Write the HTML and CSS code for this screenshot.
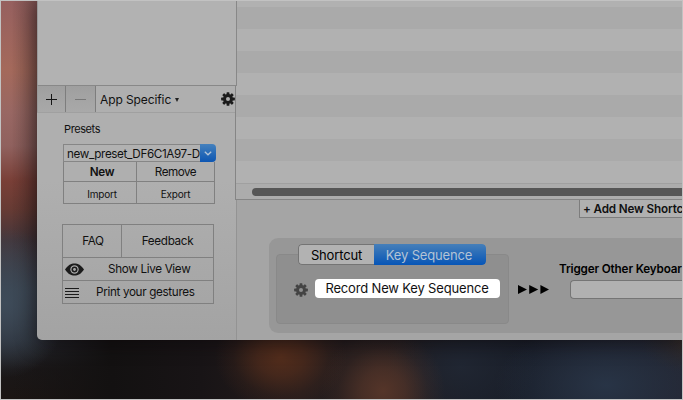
FILE: index.html
```
<!DOCTYPE html>
<html lang="en">
<head>
    <meta charset="UTF-8">
    <meta name="viewport" content="width=device-width, initial-scale=1.0">
    <title>Key Sequence</title>
    <link rel="stylesheet" href="styles.css">
</head>
<body>
    <!-- gear shared by both settings buttons -->
    <svg width="0" height="0" class="defs">
        <symbol id="gear" viewBox="-10 -10 20 20">
            <g fill="currentColor">
                <g id="teeth">
                    <rect x="-2" y="-9.8" width="4" height="19.6" rx="0.8"/>
                    <rect x="-9.8" y="-2" width="19.6" height="4" rx="0.8"/>
                </g>
                <use href="#teeth" transform="rotate(45)"/>
                <circle r="7"/>
            </g>
            <circle class="gear-hole" r="2.9"/>
        </symbol>
    </svg>

    <div class="desktop">
        <div class="window">
            <!-- Sidebar -->
            <div class="sidebar">
                <div class="app-list"></div>
                <div class="toolbar">
                    <button class="tool-btn">
                        <svg width="11" height="11" viewBox="0 0 11 11"><path d="M0 5.5h11M5.5 0v11" stroke="#151515"/></svg>
                    </button>
                    <button class="tool-btn disabled">
                        <svg width="11" height="11" viewBox="0 0 11 11"><path d="M0 5.5h11" stroke="#777"/></svg>
                    </button>
                    <span class="app-specific">App Specific</span>
                    <svg class="caret" width="4" height="4" viewBox="0 0 4 4"><path d="M0 0h4L2 4z" fill="#222"/></svg>
                    <svg class="toolbar-gear" width="14" height="14"><use href="#gear"/></svg>
                </div>

                <div class="presets">
                    <div class="presets-label">Presets</div>
                    <div class="combo">
                        <div class="combo-value"><span>new_preset_DF6C1A97-D</span></div>
                        <div class="combo-arrow">
                            <svg width="8" height="5" viewBox="0 0 8 5"><path d="M.8.7 4 3.8 7.2.7" fill="none" stroke="#b4c4d6" stroke-width="1.3"/></svg>
                        </div>
                    </div>
                    <div class="preset-grid">
                        <button class="new"><span>New</span></button>
                        <button class="remove"><span>Remove</span></button>
                        <button class="small import"><span>Import</span></button>
                        <button class="small export"><span>Export</span></button>
                    </div>
                </div>

                <div class="links">
                    <div class="links-row">
                        <button class="faq"><span>FAQ</span></button>
                        <button class="feedback"><span>Feedback</span></button>
                    </div>
                    <button class="wide live">
                        <svg width="19" height="13" viewBox="0 0 19 13">
                            <path d="M0 6.5C3 2 6 .4 9.5 .4S16 2 19 6.5C16 11 13 12.6 9.5 12.6S3 11 0 6.5z" fill="#1b1b1b"/>
                            <circle cx="9.5" cy="6.5" r="4.2" fill="#a9a9a9"/>
                            <circle cx="9.5" cy="6.5" r="3" fill="#1b1b1b"/>
                            <circle cx="9.5" cy="6.5" r="1.4" fill="#a9a9a9"/>
                        </svg>
                        <span>Show Live View</span>
                    </button>
                    <button class="wide print">
                        <svg width="14" height="10" viewBox="0 0 14 10"><path d="M0 .5h14M0 3.5h14M0 6.5h14M0 9.5h14" stroke="#1b1b1b"/></svg>
                        <span>Print your gestures</span>
                    </button>
                </div>
            </div>

            <!-- Shortcuts -->
            <div class="main">
                <div class="table">
                    <div class="rows"></div>
                    <div class="scrollbar"><div class="thumb"></div></div>
                </div>
                <div class="details">
                    <button class="add"><span>+ Add New Shortc</span></button>
                    <div class="panel">
                        <div class="sequence">
                            <div class="tabs">
                                <div class="tab"><span>Shortcut</span></div>
                                <div class="tab active"><span>Key Sequence</span></div>
                            </div>
                            <div class="record-row">
                                <svg class="record-gear" width="14" height="14"><use href="#gear"/></svg>
                                <button class="record"><span>Record New Key Sequence</span></button>
                            </div>
                        </div>
                        <svg class="arrows" width="31" height="9" viewBox="0 0 31 9"><path d="M0 0 9 4.5 0 9zM11.2 0l9 4.5-9 4.5zM22.4 0l8.6 4.5-8.6 4.5z"/></svg>
                        <div class="trigger">
                            <div class="trigger-label"><span>Trigger Other Keyboar</span></div>
                            <div class="trigger-field"></div>
                        </div>
                    </div>
                </div>
            </div>
        </div>
    </div>
</body>
</html>
```
FILE: styles.css
```
* {
    box-sizing: border-box;
}

body {
    margin: 0;
    font-family: Inter, "Liberation Sans", sans-serif;
    font-size: 11.7px;
    letter-spacing: -0.33px;
    color: #111;
}

button {
    margin: 0;
    padding: 0;
    border: 0;
    background: none;
    font: inherit;
    letter-spacing: inherit;
    color: inherit;
}

svg {
    display: block;
    flex: none;
}

span {
    white-space: nowrap;
}

.defs {
    position: absolute;
}

.gear-hole {
    fill: var(--hole);
}

.desktop {
    width: 683px;
    height: 400px;
    padding-left: 36px;
    border: 1px solid #c2c2c2;
    overflow: hidden;
    background:
        radial-gradient(ellipse 66px 54px at 280px 356px, #532d1c, rgba(83, 45, 28, 0.7) 35%, rgba(83, 45, 28, 0.2) 72%, rgba(83, 45, 28, 0)),
        radial-gradient(ellipse 62px 62px at 382px 390px, #553529, rgba(85, 53, 41, 0.7) 35%, rgba(85, 53, 41, 0.2) 72%, rgba(85, 53, 41, 0)),
        radial-gradient(ellipse 110px 65px at 605px 384px, #283446, rgba(40, 52, 70, 0)),
        radial-gradient(ellipse 75px 60px at 460px 365px, #202632, rgba(32, 38, 50, 0)),
        radial-gradient(ellipse 50px 30px at 690px 342px, #302722, rgba(48, 39, 34, 0)),
        radial-gradient(ellipse 62px 75px at 5px 302px, #3e4b59, rgba(62, 75, 89, 0)),
        linear-gradient(90deg, rgba(18, 17, 17, 0) 10px, #131111 110px, #181416 200px, #251c1c 300px, #231e20 400px, #191d27 470px, #191e29 530px, #232531),
        linear-gradient(#96605f, #a4695b 68px, #986763 112px, #90615e 145px, #793f37 180px, #673b34 208px, #44363b 240px, #38404a 290px, #282c34 340px, #1a1718 368px, #1b1513);
}

.window {
    display: flex;
    width: 645px;
    height: 339px;
    border-bottom-left-radius: 5px;
    overflow: hidden;
    background: linear-gradient(#afafaf 180px, #a3a3a3);
    box-shadow: 0 2px 20px rgba(10, 5, 8, 0.6);
}

/* Sidebar */
.sidebar {
    width: 198px;
    flex: none;
}

.app-list {
    position: relative;
    z-index: 1;
    width: 200px;
    height: 85px;
    border-right: 1px solid #888;
    border-bottom: 1px solid #888;
    border-left: 1px solid #999;
    background: #b2b2b2;
}

.toolbar {
    display: flex;
    align-items: center;
    height: 27px;
    border-bottom: 1px solid #a0a0a0;
    border-left: 1px solid #999;
}

.tool-btn {
    display: flex;
    align-items: center;
    justify-content: center;
    width: 28px;
    height: 26px;
    border-right: 1px solid #7d7d7d;
    background: linear-gradient(#9f9f9f, #a9a9a9);
}

.tool-btn.disabled {
    width: 30px;
}

.app-specific {
    margin: 1px 4px 0 4px;
    font-size: 12px;
    letter-spacing: -0.1px;
}

.caret {
    margin-top: 2px;
}

.toolbar-gear {
    margin-left: auto;
    color: #1b1b1b;
    --hole: #acacac;
}

.presets {
    width: 153px;
    margin: 10px 0 0 26px;
}

.presets-label {
    height: 21px;
    padding-left: 1px;
    font-size: 11px;
    letter-spacing: -0.4px;
    line-height: 13px;
}

.combo {
    display: flex;
    height: 18px;
}

.combo-value {
    width: 137px;
    padding-left: 3px;
    border: 1px solid #868686;
    border-right: 0;
    background: #b1b1b1;
    letter-spacing: -0.38px;
    line-height: 18px;
    overflow: hidden;
}

.combo-arrow {
    display: flex;
    align-items: center;
    justify-content: center;
    width: 16px;
    border-radius: 0 4px 4px 0;
    background: linear-gradient(#4581bd, #0d56b2);
}

.preset-grid {
    display: grid;
    grid-template-columns: 73px 77px;
    grid-template-rows: 20px 22px;
    width: 152px;
    border-right: 1px solid #808080;
    border-left: 1px solid #808080;
}

.preset-grid button {
    display: flex;
    align-items: center;
    justify-content: center;
    border-right: 1px solid #808080;
    border-bottom: 1px solid #808080;
}

.preset-grid .remove,
.preset-grid .export {
    border-right: 0;
}

.preset-grid .remove {
    letter-spacing: -0.5px;
}

.preset-grid .new {
    padding-left: 4px;
    font-weight: 600;
}

.preset-grid .small {
    padding-top: 3px;
    font-size: 10px;
    letter-spacing: -0.2px;
}

.preset-grid .import {
    padding-left: 4px;
}

.links {
    width: 152px;
    height: 80px;
    margin: 20px 0 0 25px;
    border: 1px solid #808080;
}

.links-row {
    display: flex;
    height: 33px;
    border-bottom: 1px solid #808080;
}

.faq {
    width: 59px;
    padding-left: 2px;
    border-right: 1px solid #808080;
}

.feedback {
    flex: 1;
}

.wide {
    display: flex;
    align-items: center;
    width: 100%;
    height: 23px;
    padding-left: 2px;
    border-bottom: 1px solid #808080;
}

.print {
    border-bottom: 0;
}

.live span {
    margin-left: 24px;
}

.print span {
    margin: 0 0 1px 17px;
}

/* Shortcut table */
.main {
    flex: 1;
    min-width: 0;
}

.table {
    height: 199px;
    border-bottom: 1px solid #858585;
    border-left: 1px solid #858585;
}

.rows {
    height: 182px;
    background: repeating-linear-gradient(#b1b1b1 0, #b1b1b1 6px, #aaa 6px, #aaa 28px, #b1b1b1 28px, #b1b1b1 44px);
}

.scrollbar {
    height: 16px;
    padding: 4px 0 0 16px;
    border-top: 1px solid #a0a0a0;
    background: #acacac;
}

.thumb {
    height: 8px;
    border-radius: 4px 0 0 4px;
    background: #565656;
}

.details {
    height: 140px;
    margin-left: 1px;
    border-left: 1px solid #939393;
    background: #a5a5a5;
}

.add {
    display: flex;
    align-items: center;
    width: 103px;
    height: 18px;
    margin-left: 342px;
    padding-left: 3px;
    border: 1px solid #7d7d7d;
    border-width: 0 0 1px 1px;
    background: #b0b0b0;
    font-weight: 600;
    letter-spacing: -0.15px;
}

/* Key sequence panel */
.panel {
    display: flex;
    height: 95px;
    margin: 20px 0 0 32px;
    border-radius: 9px 0 0 9px;
    background: #979797;
}

.sequence {
    flex: none;
    width: 233px;
    height: 70px;
    margin: 16px 0 0 7px;
    border: 1px solid #898989;
    border-radius: 4px;
    background: #8f8f8f;
}

.tabs {
    display: flex;
    width: 188px;
    height: 21px;
    margin: -11px 0 0 21px;
    border-radius: 4px;
    overflow: hidden;
    font-size: 13px;
    letter-spacing: -0.15px;
}

.tab {
    display: flex;
    align-items: center;
    justify-content: center;
    width: 76px;
    border: 1px solid #747474;
    border-right: 0;
    border-radius: 4px 0 0 4px;
    background: #b2b2b2;
    color: #000;
}

.tab.active {
    width: 112px;
    padding-right: 2px;
    border: 0;
    border-radius: 0 4px 4px 0;
    background: linear-gradient(#467fb9, #0655b7);
    color: #b4c3d5;
}

.record-row {
    display: flex;
    align-items: center;
    margin-top: 14px;
    padding-left: 17px;
}

.record-gear {
    margin-top: 3px;
    color: #444;
    --hole: #8f8f8f;
}

.record {
    width: 185px;
    height: 19px;
    margin-left: 7px;
    padding-right: 1px;
    border-radius: 4px;
    background: #fff;
    font-size: 13px;
    letter-spacing: -0.17px;
    line-height: 19px;
}

.arrows {
    margin: 47px 0 0 9px;
}

.trigger {
    flex: 1;
    min-width: 0;
    margin: 24px 0 0 10px;
    overflow: hidden;
}

.trigger-label {
    height: 18px;
    font-weight: 600;
    letter-spacing: -0.15px;
    line-height: 15px;
    color: #000;
}

.trigger-field {
    height: 19px;
    margin-left: 11px;
    border: 1px solid #757575;
    border-right: 0;
    border-radius: 4px 0 0 4px;
    background: #b1b1b1;
}
```
